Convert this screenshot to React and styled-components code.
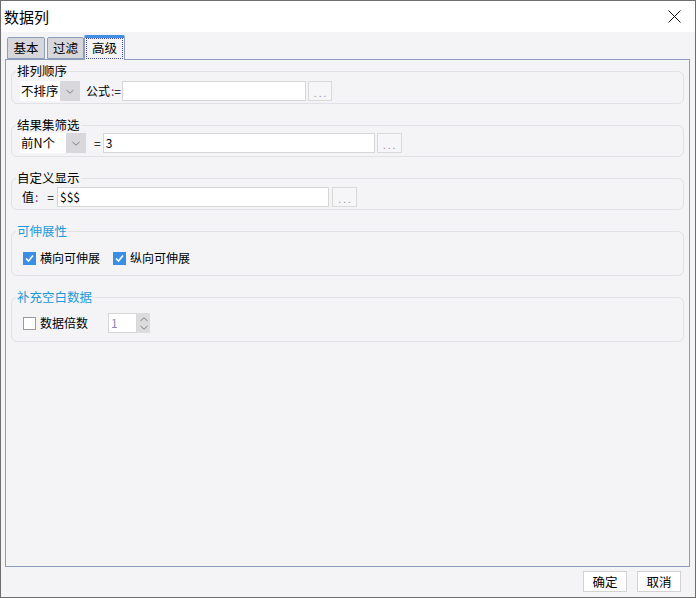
import React from 'react';
import styled, { createGlobalStyle } from 'styled-components';

const GlobalStyle = createGlobalStyle`
  html, body {
    margin: 0;
    padding: 0;
    background: #ffffff;
  }
  body {
    font-family: "Noto Sans CJK SC", "Noto Sans", "Liberation Sans", sans-serif;
    font-size: 12px;
    color: #000;
  }
  * { box-sizing: border-box; }
`;

const Window = styled.div`
  width: 696px;
  height: 598px;
  border: 1px solid #6e6e6e;
  display: flex;
  flex-direction: column;
  background: #f4f4f6;
`;

const TitleBar = styled.div`
  height: 31px;
  flex: none;
  background: #ffffff;
  display: flex;
  align-items: center;
  justify-content: space-between;
  padding: 0 14px 0 3px;
  font-size: 15px;
`;

const Body = styled.div`
  flex: 1;
  display: flex;
  flex-direction: column;
  padding: 0 5px 0 4px;
  min-height: 0;
`;

const TabStrip = styled.div`
  height: 28px;
  flex: none;
  display: flex;
  align-items: flex-end;
  padding-left: 2px;
  margin-bottom: -1px;
  position: relative;
  z-index: 1;
`;

const Tab = styled.div`
  height: ${(p) => (p.$active ? '25px' : '22px')};
  width: ${(p) => p.$w}px;
  margin-right: ${(p) => p.$mr || 0}px;
  margin-bottom: ${(p) => (p.$active ? '0' : '1px')};
  border: 1px solid #8b9dbb;
  border-bottom: ${(p) => (p.$active ? 'none' : '1px solid #8b9dbb')};
  border-top: ${(p) => (p.$active ? '3px solid #3f8fe6' : '1px solid #8b9dbb')};
  border-radius: 2px 2px 0 0;
  background: ${(p) => (p.$active ? '#f4f4f6' : '#d6d6db')};
  display: flex;
  align-items: stretch;
  justify-content: center;
  padding: ${(p) => (p.$active ? '0 1px 1px' : '0')};
  font-size: 12.5px;
  line-height: 20px;
  text-align: center;
`;

const TabLabel = styled.span`
  flex: 1;
  border: ${(p) => (p.$focus ? '1px dotted #4a4a9a' : '1px solid transparent')};
  line-height: 18px;
`;

const Panel = styled.div`
  flex: 1;
  border: 1px solid #8b9dbb;
  background: #f4f4f6;
  padding: 3px 5px;
  display: flex;
  flex-direction: column;
  gap: 13px;
`;

const Group = styled.fieldset`
  margin: 0;
  min-width: 0;
  border: 1px solid #e1e1e6;
  border-radius: 6px;
  padding: 0 4px ${(p) => p.$pb || 2}px 4px;
`;

const Legend = styled.legend`
  padding: 0 1px;
  font-size: 12.5px;
  line-height: 16px;
  color: ${(p) => (p.$blue ? '#1d9ad8' : '#000')};
`;

const Row = styled.div`
  height: 20px;
  margin-top: ${(p) => p.$mt || 0}px;
  display: flex;
  align-items: center;
  padding-left: ${(p) => p.$pl || 4}px;
`;

const Select = styled.div`
  width: ${(p) => p.$w}px;
  height: 20px;
  display: flex;
  background: #ffffff;
`;

const SelectText = styled.span`
  flex: 1;
  padding-left: 1px;
  line-height: 20px;
  font-size: 12.5px;
`;

const SelectArrow = styled.span`
  width: 20px;
  background: #d8d8dc;
  display: flex;
  align-items: center;
  justify-content: center;
`;

const Label = styled.span`
  margin-left: ${(p) => p.$ml || 0}px;
  white-space: pre;
  line-height: 20px;
`;

const Colon = styled.span`
  color: #7a2d86;
  margin-left: 1px;
`;

const TextInput = styled.div`
  width: ${(p) => p.$w}px;
  height: 20px;
  margin-left: ${(p) => p.$ml || 0}px;
  border: 1px solid #d6d6d6;
  background: #ffffff;
  padding-left: 2px;
  line-height: 18px;
  color: ${(p) => (p.$muted ? '#8e88aa' : '#000')};
`;

const DotsButton = styled.div`
  width: ${(p) => p.$w || 24}px;
  height: 20px;
  margin-left: ${(p) => p.$ml || 2}px;
  border: 1px solid #d9d9d9;
  background: #f6f6f8;
  color: #9d86a6;
  font-size: 10px;
  letter-spacing: 2px;
  display: flex;
  align-items: center;
  justify-content: center;
  padding-left: 2px;
  padding-top: 2px;
`;

const Check = styled.span`
  width: 13px;
  height: 13px;
  flex: none;
  margin-left: ${(p) => p.$ml || 0}px;
  background: ${(p) => (p.$checked ? '#3b8ee6' : '#ffffff')};
  border: ${(p) => (p.$checked ? 'none' : '1px solid #9a9a9a')};
  display: flex;
  align-items: center;
  justify-content: center;
`;

const CheckLabel = styled.span`
  margin-left: 4px;
  line-height: 20px;
`;

const Spinner = styled.div`
  display: flex;
  height: 20px;
  margin-left: ${(p) => p.$ml || 0}px;
`;

const SpinButtons = styled.div`
  width: 13px;
  background: #dcdcdf;
  display: flex;
  flex-direction: column;
  align-items: center;
  justify-content: space-around;
  padding: 2px 0;
`;

const Footer = styled.div`
  height: 30px;
  flex: none;
  display: flex;
  align-items: center;
  justify-content: flex-end;
  gap: 10px;
  padding: 0 9px 2px 0;
`;

const Button = styled.div`
  width: 44px;
  height: 21px;
  border: 1px solid #d2d2d2;
  background: #ffffff;
  text-align: center;
  line-height: 19px;
  font-size: 12.5px;
`;

const Chevron = ({ up }) => (
  <svg width="8" height="5" viewBox="0 0 8 5">
    <path
      d={up ? 'M0.5 4 L4 0.8 L7.5 4' : 'M0.5 1 L4 4.2 L7.5 1'}
      fill="none"
      stroke="#808080"
      strokeWidth="1"
    />
  </svg>
);

const CheckMark = () => (
  <svg width="11" height="11" viewBox="0 0 11 11">
    <path d="M2 5.5 L4.5 8 L9 2.5" fill="none" stroke="#fff" strokeWidth="1.6" />
  </svg>
);

const CloseIcon = () => (
  <svg width="13" height="13" viewBox="0 0 13 13">
    <path d="M0.5 0.5 L12.5 12.5 M12.5 0.5 L0.5 12.5" stroke="#111" strokeWidth="1" />
  </svg>
);

const App = () => {
  return (
    <>
      <GlobalStyle />
      <Window>
        <TitleBar>
          <span>数据列</span>
          <CloseIcon />
        </TitleBar>
        <Body>
          <TabStrip>
            <Tab $w={38} $mr={2}><TabLabel>基本</TabLabel></Tab>
            <Tab $w={37}><TabLabel>过滤</TabLabel></Tab>
            <Tab $w={41} $active><TabLabel $focus>高级</TabLabel></Tab>
          </TabStrip>
          <Panel>
            <Group>
              <Legend>排列顺序</Legend>
              <Row $mt={2}>
                <Select $w={60}>
                  <SelectText>不排序</SelectText>
                  <SelectArrow><Chevron /></SelectArrow>
                </Select>
                <Label $ml={6}>公式<Colon>:</Colon>=</Label>
                <TextInput $w={184} $ml={1} />
                <DotsButton>...</DotsButton>
              </Row>
            </Group>

            <Group $pb={3}>
              <Legend>结果集筛选</Legend>
              <Row $mt={0}>
                <Select $w={66}>
                  <SelectText>前N个</SelectText>
                  <SelectArrow><Chevron /></SelectArrow>
                </Select>
                <Label $ml={8}>=</Label>
                <TextInput $w={272} $ml={2}>3</TextInput>
                <DotsButton $w={25}>...</DotsButton>
              </Row>
            </Group>

            <Group $pb={2}>
              <Legend>自定义显示</Legend>
              <Row $mt={1}>
                <Label $ml={2}>值<Colon>:</Colon></Label>
                <Label $ml={9}>=</Label>
                <TextInput $w={272} $ml={3}>$$$</TextInput>
                <DotsButton $w={25} $ml={3}>...</DotsButton>
              </Row>
            </Group>

            <Group $pb={7}>
              <Legend $blue>可伸展性</Legend>
              <Row $mt={9} $pl={7}>
                <Check $checked><CheckMark /></Check>
                <CheckLabel>横向可伸展</CheckLabel>
                <Check $checked $ml={13}><CheckMark /></Check>
                <CheckLabel>纵向可伸展</CheckLabel>
              </Row>
            </Group>

            <Group $pb={8}>
              <Legend $blue>补充空白数据</Legend>
              <Row $mt={8} $pl={7}>
                <Check />
                <CheckLabel>数据倍数</CheckLabel>
                <Spinner $ml={20}>
                  <TextInput $w={29} $muted>1</TextInput>
                  <SpinButtons>
                    <Chevron up />
                    <Chevron />
                  </SpinButtons>
                </Spinner>
              </Row>
            </Group>
          </Panel>
          <Footer>
            <Button>确定</Button>
            <Button>取消</Button>
          </Footer>
        </Body>
      </Window>
    </>
  );
};

export default App;
